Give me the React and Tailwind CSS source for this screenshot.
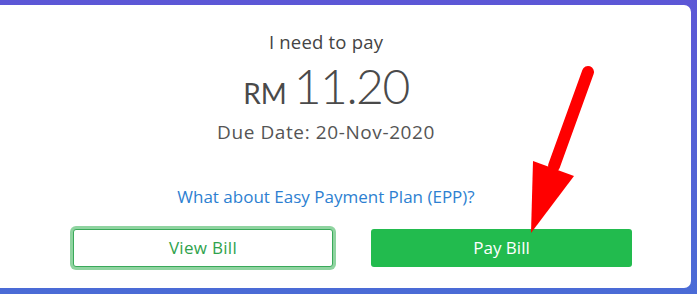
import React from "react";

function Arrow() {
  return (
    <svg
      className="pointer-events-none absolute left-0 top-0"
      width="697"
      height="294"
      viewBox="0 0 697 294"
    >
      <line x1="588" y1="72" x2="554" y2="166" stroke="#ff0000" strokeWidth="12" strokeLinecap="round" />
      <polygon points="533,161 574,176 531,233" fill="#ff0000" />
    </svg>
  );
}

export default function App() {
  return (
    <div
      className="relative h-[294px] w-[697px] overflow-hidden bg-gradient-to-b from-[#5c57d6] to-[#4a6bd6] pt-[5px]"
      style={{ fontFamily: "'Open Sans', Lato, sans-serif" }}
    >
      <div className="flex h-[283px] w-[691px] flex-col rounded-r-[7px] bg-white">
        <div className="flex w-[652px] flex-col items-center text-[#444]">
          <p className="mt-[24px] text-[18.5px] leading-[26px] tracking-[0.2px]">I need to pay</p>
          <div className="mt-[7px] flex items-baseline gap-[7px] leading-none">
            <span className="text-[28px] text-[#4a4a4a]" style={{ fontFamily: "Lato, sans-serif" }}>RM</span>
            <span className="text-[48px] font-light tracking-[-1.5px] text-[#4a4a4a]" style={{ fontFamily: "Lato, sans-serif" }}>11.20</span>
          </div>
          <p className="mt-[9px] text-[19px] leading-[26px] tracking-[0.6px] text-[#555]">Due Date: 20-Nov-2020</p>
          <a className="mt-[40px] text-[17px] leading-[24px] text-[#2d7fd1]">
            What about Easy Payment Plan (EPP)?
          </a>
        </div>
        <div className="mt-[20px] flex gap-[38px] pl-[73px]">
          <button className="flex h-[38px] w-[260px] items-center justify-center rounded-[3px] border border-[#3aa95a] bg-white text-[17px] tracking-[0.3px] text-[#2fa24c] ring-[3px] ring-[#8fd4a0]">
            View Bill
          </button>
          <button className="flex h-[38px] w-[261px] items-center justify-center rounded-[3px] bg-[#22bb4e] text-[17px] text-white">
            Pay Bill
          </button>
        </div>
      </div>
      <Arrow />
    </div>
  );
}
